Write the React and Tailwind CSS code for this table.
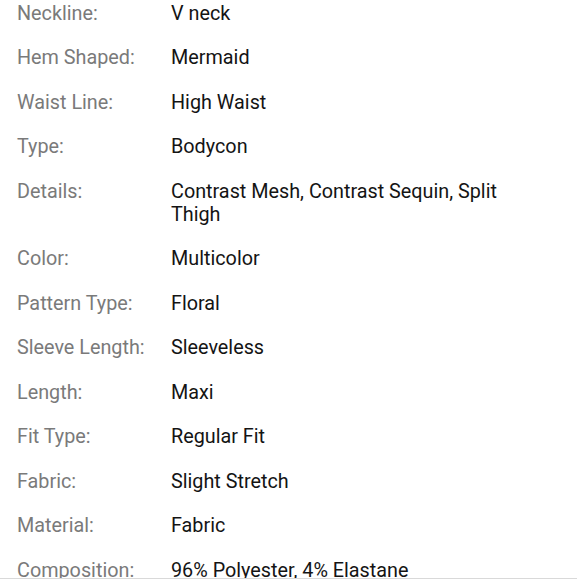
import React from "react";

const specs = [
  ["Neckline:", "V neck"],
  ["Hem Shaped:", "Mermaid"],
  ["Waist Line:", "High Waist"],
  ["Type:", "Bodycon"],
  ["Details:", "Contrast Mesh, Contrast Sequin, Split Thigh"],
  ["Color:", "Multicolor"],
  ["Pattern Type:", "Floral"],
  ["Sleeve Length:", "Sleeveless"],
  ["Length:", "Maxi"],
  ["Fit Type:", "Regular Fit"],
  ["Fabric:", "Slight Stretch"],
  ["Material:", "Fabric"],
  ["Composition:", "96% Polyester, 4% Elastane"],
];

const SpecRow = ({ label, value }) => (
  <div className="flex py-[10.75px] leading-[23px]">
    <div className="w-[171px] shrink-0 pl-[17px] text-[#7a7a7a]">{label}</div>
    <div className="w-[350px] text-[#141414]">{value}</div>
  </div>
);

export default function App() {
  return (
    <div className="h-[580px] w-[577px] overflow-hidden bg-white">
      <div
        className="h-[579px] overflow-hidden border-b border-[#d9d9d9] text-[19.8px]"
        style={{ fontFamily: "Roboto, 'Noto Sans', sans-serif" }}
      >
        <div className="-mt-[9.25px]">
          {specs.map(([label, value]) => (
            <SpecRow key={label} label={label} value={value} />
          ))}
        </div>
      </div>
    </div>
  );
}
